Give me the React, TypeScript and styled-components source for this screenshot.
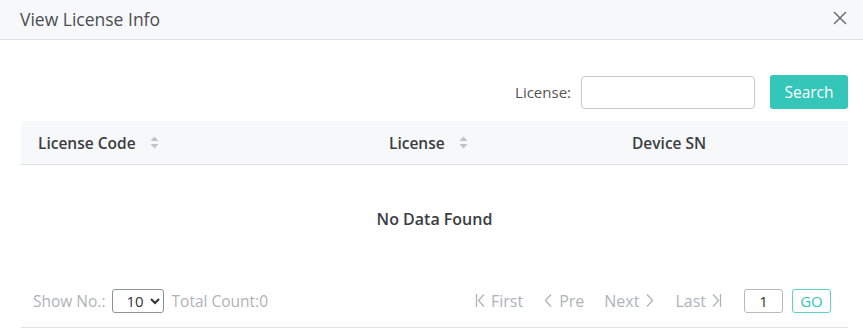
import React, { useState } from 'react';
import styled, { createGlobalStyle } from 'styled-components';

const GlobalStyle = createGlobalStyle`
  html, body {
    margin: 0;
    padding: 0;
    background: #ffffff;
  }
  body {
    font-family: 'Open Sans', 'Noto Sans', sans-serif;
    color: #333;
  }
  * { box-sizing: border-box; }
`;

const Dialog = styled.div`
  width: 863px;
  height: 336px;
  background: #fff;
  display: flex;
  flex-direction: column;
`;

const Header = styled.div`
  height: 40px;
  background: #f7f8fa;
  border-bottom: 1px solid #dfe2e8;
  display: flex;
  align-items: center;
  justify-content: space-between;
  padding: 0 14px 2px 20px;
`;

const Title = styled.h2`
  margin: 0;
  font-size: 17.5px;
  font-weight: 400;
  color: #4a4d52;
`;

const CloseButton = styled.button`
  border: none;
  background: none;
  padding: 0;
  width: 16px;
  height: 16px;
  display: flex;
  cursor: pointer;
`;

const Body = styled.div`
  padding: 35px 15px 0 21px;
  display: flex;
  flex-direction: column;
`;

const SearchRow = styled.div`
  display: flex;
  justify-content: flex-end;
  align-items: center;
  gap: 10px;
  height: 34px;
`;

const Label = styled.label`
  font-size: 15px;
  color: #555;
`;

const SearchInput = styled.input`
  width: 174px;
  height: 33px;
  border: 1px solid #c5c8ce;
  border-radius: 4px;
  margin-right: 5px;
  outline: none;
`;

const SearchButton = styled.button`
  width: 78px;
  height: 34px;
  border: none;
  border-radius: 3px;
  background: #34c6b8;
  color: #fff;
  font-family: inherit;
  font-size: 15.5px;
  cursor: pointer;
`;

const Table = styled.div`
  margin-top: 12px;
  width: 827px;
`;

const HeadRow = styled.div`
  display: grid;
  grid-template-columns: 351px 243px 1fr;
  height: 44px;
  background: #f7f8fa;
  border-bottom: 1px solid #dfe2e8;
  align-items: center;
`;

const HeadCell = styled.div`
  padding-left: 17px;
  font-size: 15.5px;
  font-weight: 600;
  color: #3a3d42;
  display: flex;
  align-items: center;
  gap: 14px;
`;

const Empty = styled.div`
  height: 107px;
  display: flex;
  align-items: center;
  justify-content: center;
  font-size: 16px;
  font-weight: 600;
  color: #3a3d42;
`;

const Footer = styled.div`
  display: flex;
  align-items: center;
  justify-content: space-between;
  height: 56px;
  border-bottom: 1px solid #dfe2e8;
  padding: 2px 17px 0 12px;
  width: 827px;
`;

const FooterGroup = styled.div<{ $gap: number }>`
  display: flex;
  align-items: center;
  gap: ${({ $gap }) => $gap}px;
  font-size: 15.5px;
  color: #b0b3b8;
`;

const PageSelect = styled.select`
  width: 52px;
  height: 24px;
  border: 1px solid #8f9297;
  border-radius: 3px;
  font-family: inherit;
  font-size: 15px;
  color: #333;
  background: #fff;
  padding: 0 0 0 10px;
  margin-right: 2px;
`;

const PageLink = styled.span`
  display: flex;
  align-items: center;
  gap: 5px;
  color: #b0b3b8;
  font-size: 16px;
`;

const PageInput = styled.input`
  width: 39px;
  height: 24px;
  border: 1px solid #b5b8bd;
  border-radius: 3px;
  text-align: center;
  font-family: inherit;
  font-size: 15px;
  color: #333;
  padding: 0;
`;

const GoButton = styled.button`
  width: 39px;
  height: 24px;
  border: 1px solid #5fd2c6;
  border-radius: 3px;
  background: #fff;
  color: #34c6b8;
  font-family: inherit;
  font-size: 15px;
  padding: 0;
`;

const Jump = styled.div`
  display: flex;
  align-items: center;
  gap: 9px;
  margin-left: 2px;
`;

const SortIcon = () => (
  <svg width="9" height="13" viewBox="0 0 9 13">
    <path d="M4.5 0.5 L8.5 5 H0.5 Z" fill="#c0c3c8" />
    <path d="M4.5 12.5 L8.5 8 H0.5 Z" fill="#c0c3c8" />
  </svg>
);

const Chevron = ({ dir, bar }: { dir: 'left' | 'right'; bar?: boolean }) => (
  <svg width="11" height="15" viewBox="0 0 11 15" fill="none" stroke="#b0b3b8" strokeWidth="1.3">
    {dir === 'left' ? (
      <>
        {bar && <path d="M1.5 1 V14" />}
        <path d={bar ? 'M9 1.5 L3.5 7.5 L9 13.5' : 'M8 1.5 L2.5 7.5 L8 13.5'} />
      </>
    ) : (
      <>
        <path d={bar ? 'M2 1.5 L7.5 7.5 L2 13.5' : 'M3 1.5 L8.5 7.5 L3 13.5'} />
        {bar && <path d="M9.5 1 V14" />}
      </>
    )}
  </svg>
);

const App: React.FC = () => {
  const [license, setLicense] = useState('');
  const [page, setPage] = useState('1');

  return (
    <Dialog>
      <GlobalStyle />
      <Header>
        <Title>View License Info</Title>
        <CloseButton aria-label="close">
          <svg width="14" height="14" viewBox="0 0 14 14" stroke="#6b6f76" strokeWidth="1.5">
            <path d="M1 1 L13 13 M13 1 L1 13" />
          </svg>
        </CloseButton>
      </Header>
      <Body>
        <SearchRow>
          <Label>License:</Label>
          <SearchInput value={license} onChange={(e) => setLicense(e.target.value)} />
          <SearchButton>Search</SearchButton>
        </SearchRow>
        <Table>
          <HeadRow>
            <HeadCell>
              License Code <SortIcon />
            </HeadCell>
            <HeadCell>
              License <SortIcon />
            </HeadCell>
            <HeadCell>Device SN</HeadCell>
          </HeadRow>
          <Empty>No Data Found</Empty>
        </Table>
        <Footer>
          <FooterGroup $gap={6}>
            <span>Show No.:</span>
            <PageSelect defaultValue="10">
              <option value="10">10</option>
              <option value="20">20</option>
              <option value="50">50</option>
            </PageSelect>
            <span>Total Count:0</span>
          </FooterGroup>
          <FooterGroup $gap={20}>
            <PageLink>
              <Chevron dir="left" bar /> First
            </PageLink>
            <PageLink>
              <Chevron dir="left" /> Pre
            </PageLink>
            <PageLink>
              Next <Chevron dir="right" />
            </PageLink>
            <PageLink>
              Last <Chevron dir="right" bar />
            </PageLink>
            <Jump>
              <PageInput value={page} onChange={(e) => setPage(e.target.value)} />
              <GoButton>GO</GoButton>
            </Jump>
          </FooterGroup>
        </Footer>
      </Body>
    </Dialog>
  );
};

export default App;
